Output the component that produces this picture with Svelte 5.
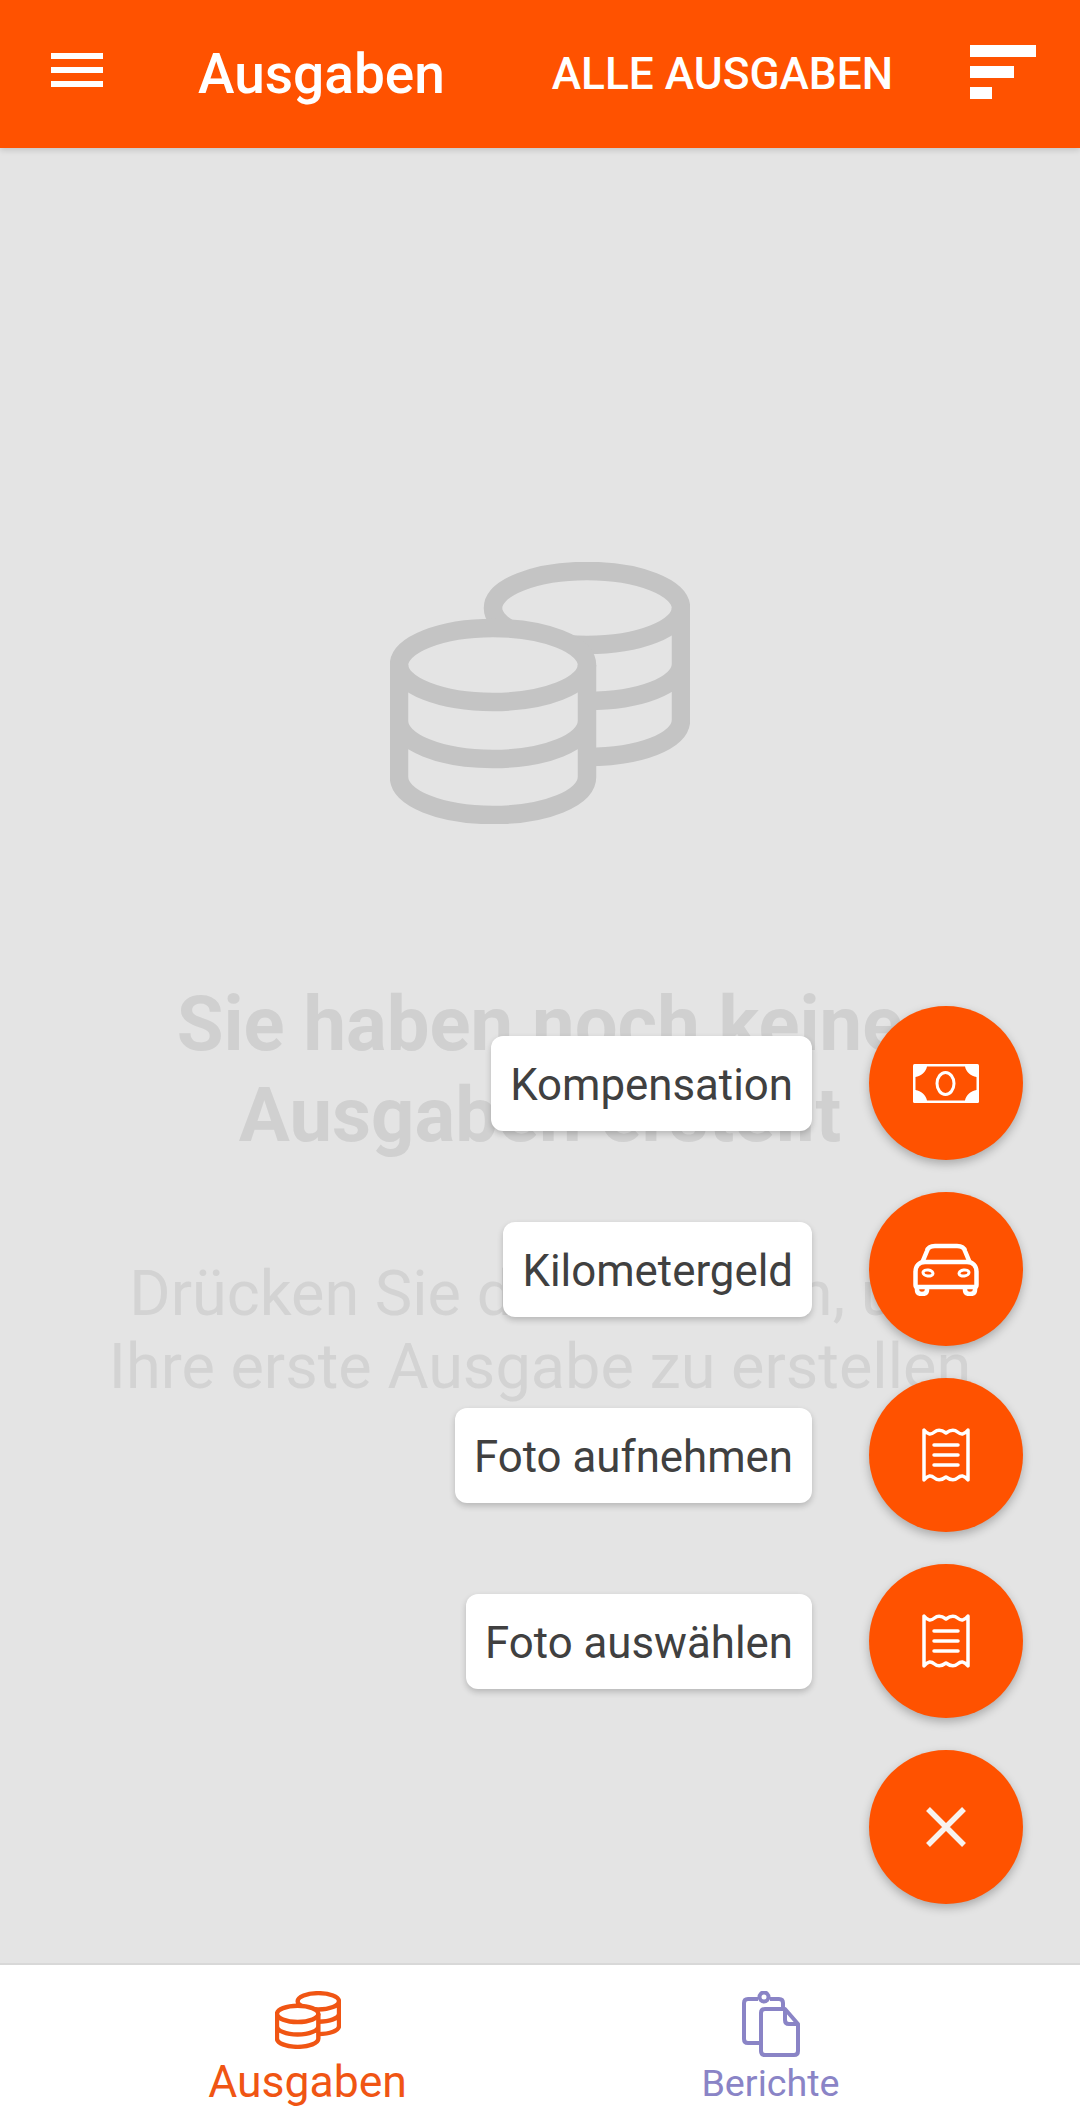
<script>
	const actions = [
		{ label: 'Kompensation', icon: 'money' },
		{ label: 'Kilometergeld', icon: 'car' },
		{ label: 'Foto aufnehmen', icon: 'receipt' },
		{ label: 'Foto auswählen', icon: 'receipt' }
	];
</script>

<div class="page">
	<header class="topbar">
		<div class="menu"><span></span><span></span><span></span></div>
		<h1>Ausgaben</h1>
		<div class="filter">ALLE AUSGABEN</div>
		<div class="sort"><span class="s1"></span><span class="s2"></span><span class="s3"></span></div>
	</header>

	<main class="empty">
		<svg class="coins" viewBox="0 0 300 262" width="300" height="262" fill="none" stroke="#c4c4c4" stroke-width="18.500">
			<ellipse cx="197" cy="46" rx="94" ry="37" />
			<path d="M291 46V158C291 179 250 195 197 195M291 102C291 123 250 139 197 139" />
			<ellipse cx="103" cy="103" rx="94" ry="37" fill="#e4e4e4" />
			<path d="M9 103V215C9 236 50 253 103 253S197 236 197 215V103M9 159C9 180 50 197 103 197S197 180 197 159" />
		</svg>
		<h2>Sie haben noch keine<br />Ausgaben erstellt</h2>
		<p>Drücken Sie den + Button, um<br />Ihre erste Ausgabe zu erstellen</p>

		<div class="fabs">
			{#each actions as a}
				<div class="row">
					<span class="label">{a.label}</span>
					<button class="fab">
						{#if a.icon == 'money'}
							<svg viewBox="0 0 66 39" width="66" height="39">
								<rect width="66" height="39" rx="1.500" fill="#fff" />
								<path d="M14 2.500H52C53 8 58 12 63.500 13V26C58 27 53 31 52 36.500H14C13 31 8 27 2.500 26V13C8 12 13 8 14 2.500Z" fill="#ff5200" />
								<ellipse cx="32.500" cy="19.500" rx="8.500" ry="11" fill="none" stroke="#fff" stroke-width="3" />
							</svg>
						{:else if a.icon == 'car'}
							<svg viewBox="0 0 66 53" width="66" height="53" fill="none" stroke="#fff" stroke-width="4.500" stroke-linejoin="round">
								<path d="M9 20L14 8C15 4 18 3 22 3H44C48 3 51 4 52 8L57 20" />
								<path d="M2.500 29C2.500 23 6 19 12 19H54C60 19 63.500 23 63.500 29V42C63.500 43 63 44 62 44H4C3 44 2.500 43 2.500 42Z" />
								<path d="M4 44V47C4 50 6 51 9 51C12 51 14 50 14 47V44M52 44V47C52 50 54 51 57 51C60 51 62 50 62 47V44" />
								<ellipse cx="15" cy="30" rx="5" ry="3" stroke-width="3" transform="rotate(8 15 30)" />
								<ellipse cx="51" cy="30" rx="5" ry="3" stroke-width="3" transform="rotate(-8 51 30)" />
							</svg>
						{:else}
							<svg viewBox="0 0 48 54" width="48" height="54" fill="none" stroke="#fff" stroke-width="3.500" stroke-linecap="round" stroke-linejoin="round">
								<path d="M2 2V52C6 47 9 47 12.500 50C16 53 20 52 24 49C28 52 32 53 35.500 50C39 47 42 47 46 52V2C42 7 39 7 35.500 4C32 1 28 2 24 5C20 2 16 1 12.500 4C9 7 6 7 2 2Z" />
								<path d="M12 17H36M12 27H36M12 37H36" />
							</svg>
						{/if}
					</button>
				</div>
			{/each}
			<div class="row">
				<button class="fab">
					<svg viewBox="0 0 40 40" width="40" height="40" stroke="#f8f2ee" stroke-width="5.500" fill="none">
						<path d="M2 2L38 38M38 2L2 38" />
					</svg>
				</button>
			</div>
		</div>
	</main>

	<nav class="tabs">
		<div class="tab active">
			<svg viewBox="0 0 300 262" width="66" height="58" fill="none" stroke="#f05513" stroke-width="20">
				<ellipse cx="197" cy="46" rx="94" ry="37" />
				<path d="M291 46V158C291 179 250 195 197 195M291 102C291 123 250 139 197 139" />
				<ellipse cx="103" cy="103" rx="94" ry="37" fill="#fff" />
				<path d="M9 103V215C9 236 50 253 103 253S197 236 197 215V103M9 159C9 180 50 197 103 197S197 180 197 159" />
			</svg>
			<span>Ausgaben</span>
		</div>
		<div class="tab">
			<svg viewBox="0 0 58 66" width="58" height="66" fill="none" stroke="#8a84c6" stroke-width="4" stroke-linejoin="round">
				<path d="M17 52H6C3.500 52 2 50.500 2 48V12C2 9.500 3.500 8 6 8H16M28 8H37C39.500 8 41 9.500 41 12V18" />
				<circle cx="22" cy="6" r="4.500" />
				<path d="M23 18H43L56 33V60C56 62.500 54.500 64 52 64H23C20.500 64 19 62.500 19 60V22C19 19.500 20.500 18 23 18Z" fill="#fff" />
				<path d="M43 18V29C43 31.500 44.500 33 47 33H56" />
			</svg>
			<span>Berichte</span>
		</div>
	</nav>
</div>

<style>
	:global(body) {
		font-family: Roboto, "Liberation Sans", sans-serif;
	}
	.page {
		display: flex;
		flex-direction: column;
		height: 100vh;
		overflow: hidden;
		background: #e4e4e4;
	}
	.topbar {
		display: flex;
		align-items: center;
		height: 148px;
		flex-shrink: 0;
		padding: 0 44px 0 51px;
		background: #ff5200;
		color: #fff;
		box-shadow: 0 2px 6px rgba(0, 0, 0, 0.15);
		z-index: 2;
	}
	.menu {
		display: flex;
		flex-direction: column;
		gap: 8px;
		width: 52px;
		margin-top: -8px;
	}
	.menu span {
		height: 6px;
		background: #fff;
	}
	h1 {
		margin: 0 0 0 95px;
		font-size: 55px;
		font-weight: 500;
	}
	.filter {
		margin-left: auto;
		margin-right: 77px;
		font-size: 44.200px;
		font-weight: 500;
	}
	.sort {
		display: flex;
		flex-direction: column;
		gap: 9px;
		width: 66px;
		margin-top: -4px;
	}
	.sort span {
		height: 12px;
		background: #fff;
	}
	.sort .s1 { width: 66px; }
	.sort .s2 { width: 44px; }
	.sort .s3 { width: 22px; }
	.empty {
		position: relative;
		flex: 1;
		display: flex;
		flex-direction: column;
		align-items: center;
		padding-top: 414px;
		text-align: center;
	}
	.coins {
		display: block;
		margin-bottom: 155px;
	}
	h2 {
		margin: 0;
		font-size: 76px;
		line-height: 91px;
		font-weight: 700;
		color: #d0d0d0;
	}
	p {
		margin: 96px 0 0;
		font-size: 63px;
		line-height: 73px;
		color: #d3d3d3;
	}
	.fabs {
		position: absolute;
		right: 57px;
		bottom: 59px;
		display: flex;
		flex-direction: column;
		gap: 32px;
	}
	.row {
		display: flex;
		align-items: center;
		justify-content: flex-end;
		gap: 57px;
	}
	.label {
		display: flex;
		align-items: center;
		height: 95px;
		box-sizing: border-box;
		padding: 3px 19px 0;
		border-radius: 12px;
		background: #fff;
		color: #404040;
		font-size: 43.800px;
		box-shadow: 0 3px 6px rgba(0, 0, 0, 0.2);
	}
	.fab {
		display: flex;
		align-items: center;
		justify-content: center;
		width: 154px;
		height: 154px;
		padding: 0;
		border: 0;
		border-radius: 50%;
		background: #ff5200;
		box-shadow: 0 4px 10px rgba(0, 0, 0, 0.25);
	}
	.tabs {
		display: grid;
		grid-template-columns: 1fr 1fr;
		height: 154px;
		flex-shrink: 0;
		padding: 0 78px 0 76px;
		background: #fff;
		border-top: 2px solid #d8d8d8;
		box-sizing: border-box;
	}
	.tab {
		display: flex;
		flex-direction: column;
		align-items: center;
		justify-content: flex-end;
		gap: 4px;
		padding-bottom: 12px;
		color: #8a84c6;
		font-size: 37.700px;
	}
	.tab.active {
		gap: 7px;
		padding-bottom: 9px;
		color: #f05513;
		font-size: 44.500px;
	}
</style>
